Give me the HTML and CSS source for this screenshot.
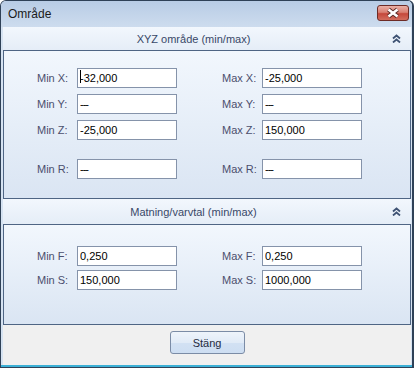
FILE: index.html
```html
<!DOCTYPE html>
<html lang="sv">
<head>
    <meta charset="UTF-8">
    <meta name="viewport" content="width=device-width, initial-scale=1.0">
    <title>Område</title>
    <link rel="stylesheet" href="styles.css">
</head>
<body>
    <div class="window">
        <div class="titlebar">
            <span class="title">Område</span>
            <button class="close-btn" title="Stäng">
                <svg width="32" height="16" viewBox="0 0 32 16">
                    <path d="M11.5 4.5L20.5 11.5M20.5 4.5L11.5 11.5" stroke="#5a2a26" stroke-width="4.4" fill="none"/>
                    <path d="M11.5 4.5L20.5 11.5M20.5 4.5L11.5 11.5" stroke="#fff" stroke-width="2.6" fill="none"/>
                </svg>
            </button>
        </div>
        <div class="client">
            <div class="section-header">
                <span class="section-title">XYZ område (min/max)</span>
                <span class="collapse-btn">
                    <svg width="9" height="9" viewBox="0 0 9 9">
                        <path d="M1 4.5L4.5 1.5L8 4.5M1 8.5L4.5 5.5L8 8.5" stroke="#3f5374" stroke-width="1.8" fill="none"/>
                    </svg>
                </span>
            </div>
            <div class="panel panel-xyz">
                <div class="row">
                    <label class="lbl">Min X:</label>
                    <span class="field focused"><input type="text" value="-32,000"></span>
                    <label class="lbl max">Max X:</label>
                    <input type="text" value="-25,000">
                </div>
                <div class="row">
                    <label class="lbl">Min Y:</label>
                    <input type="text" class="empty" value="---">
                    <label class="lbl max">Max Y:</label>
                    <input type="text" class="empty" value="---">
                </div>
                <div class="row">
                    <label class="lbl">Min Z:</label>
                    <input type="text" value="-25,000">
                    <label class="lbl max">Max Z:</label>
                    <input type="text" value="150,000">
                </div>
                <div class="row row-sep">
                    <label class="lbl">Min R:</label>
                    <input type="text" class="empty" value="---">
                    <label class="lbl max">Max R:</label>
                    <input type="text" class="empty" value="---">
                </div>
            </div>

            <div class="section-header tall">
                <span class="section-title">Matning/varvtal (min/max)</span>
                <span class="collapse-btn">
                    <svg width="9" height="9" viewBox="0 0 9 9">
                        <path d="M1 4.5L4.5 1.5L8 4.5M1 8.5L4.5 5.5L8 8.5" stroke="#3f5374" stroke-width="1.8" fill="none"/>
                    </svg>
                </span>
            </div>
            <div class="panel panel-feed">
                <div class="row">
                    <label class="lbl">Min F:</label>
                    <input type="text" value="0,250">
                    <label class="lbl max">Max F:</label>
                    <input type="text" value="0,250">
                </div>
                <div class="row">
                    <label class="lbl">Min S:</label>
                    <input type="text" value="150,000">
                    <label class="lbl max">Max S:</label>
                    <input type="text" value="1000,000">
                </div>
            </div>

            <div class="footer">
                <button class="btn">Stäng</button>
            </div>
        </div>
    </div>
</body>
</html>
```

FILE: styles.css
```css
body {
    margin: 0;
    background: #fff;
    font-family: "Liberation Sans", Arial, sans-serif;
    font-size: 11px;
}
.window {
    width: 414px;
    height: 368px;
    box-sizing: border-box;
    border: 1px solid #2f4157;
    border-right-width: 2px;
    border-radius: 6px 6px 0 0;
    padding-bottom: 2px;
    background: #d6e3f2;
    box-shadow: inset 0 -2px 0 #3bb0d6;
    overflow: hidden;
}
.titlebar {
    height: 26px;
    display: flex;
    align-items: center;
    padding-left: 7px;
    background: linear-gradient(to bottom, #b8cce5, #cddcee);
}
.title {
    flex: 1;
    font-size: 12px;
    color: #1b1b1b;
}
.close-btn {
    align-self: flex-start;
    margin: 4px 3px 0 0;
    width: 32px;
    height: 16px;
    padding: 0;
    border: 1px solid #6d2b26;
    border-radius: 3px;
    background: linear-gradient(to bottom, #eab0a6 0%, #d98073 45%, #c5483b 55%, #d26d5e 100%);
    display: flex;
    align-items: center;
    justify-content: center;
}
.close-btn svg {
    display: block;
    margin: -1px;
}
.client {
    margin: 0 1px 0 2px;
    background: #f0f0f0;
}
.section-header {
    height: 23px;
    display: flex;
    align-items: center;
    background: linear-gradient(to bottom, #f2f7fd, #e5edf7);
}
.section-header.tall {
    height: 25px;
}
.section-title {
    flex: 1;
    text-align: center;
    color: #394868;
}
.collapse-btn {
    width: 27px;
    padding-left: 8px;
    box-sizing: border-box;
    display: flex;
    align-items: center;
}
.collapse-btn svg {
    display: block;
}
.panel {
    border: 1px solid #4f6584;
    background: linear-gradient(to bottom, #f2f7fd, #dae5f3);
    padding-left: 33px;
    box-sizing: border-box;
}
.panel-xyz {
    height: 149px;
    padding-top: 17px;
}
.panel-xyz .row {
    margin-bottom: 6px;
}
.panel-xyz .row-sep {
    margin-top: 19px;
}
.panel-feed {
    height: 101px;
    padding-top: 21px;
}
.panel-feed .row {
    margin-bottom: 4px;
}
.row {
    display: flex;
    align-items: center;
    height: 20px;
}
.lbl {
    width: 40px;
    flex-shrink: 0;
    color: #4b4e6d;
}
.lbl.max {
    margin-left: 45px;
}
.field {
    position: relative;
    display: flex;
}
.field.focused::after {
    content: "";
    position: absolute;
    left: 3px;
    top: 2px;
    width: 1px;
    height: 13px;
    background: #000;
}
.row input {
    width: 100px;
    height: 20px;
    box-sizing: border-box;
    margin: 0;
    padding: 0 2px;
    border: 1px solid #8593aa;
    background: #fff;
    color: #000;
    font-family: "Liberation Sans", Arial, sans-serif;
    font-size: 11px;
    outline: none;
}
.row input.empty {
    letter-spacing: -1px;
}
.footer {
    height: 40px;
    box-sizing: border-box;
    padding-top: 6px;
    display: flex;
    justify-content: center;
    align-items: flex-start;
}
.btn {
    width: 75px;
    height: 23px;
    padding: 0;
    border: 1px solid #7b8ca6;
    border-radius: 3px;
    background: linear-gradient(to bottom, #eef4fb 0%, #e1ebf7 50%, #d2e1f3 51%, #cddef2 100%);
    color: #1f2b40;
    font-family: "Liberation Sans", Arial, sans-serif;
    font-size: 11px;
}
```
